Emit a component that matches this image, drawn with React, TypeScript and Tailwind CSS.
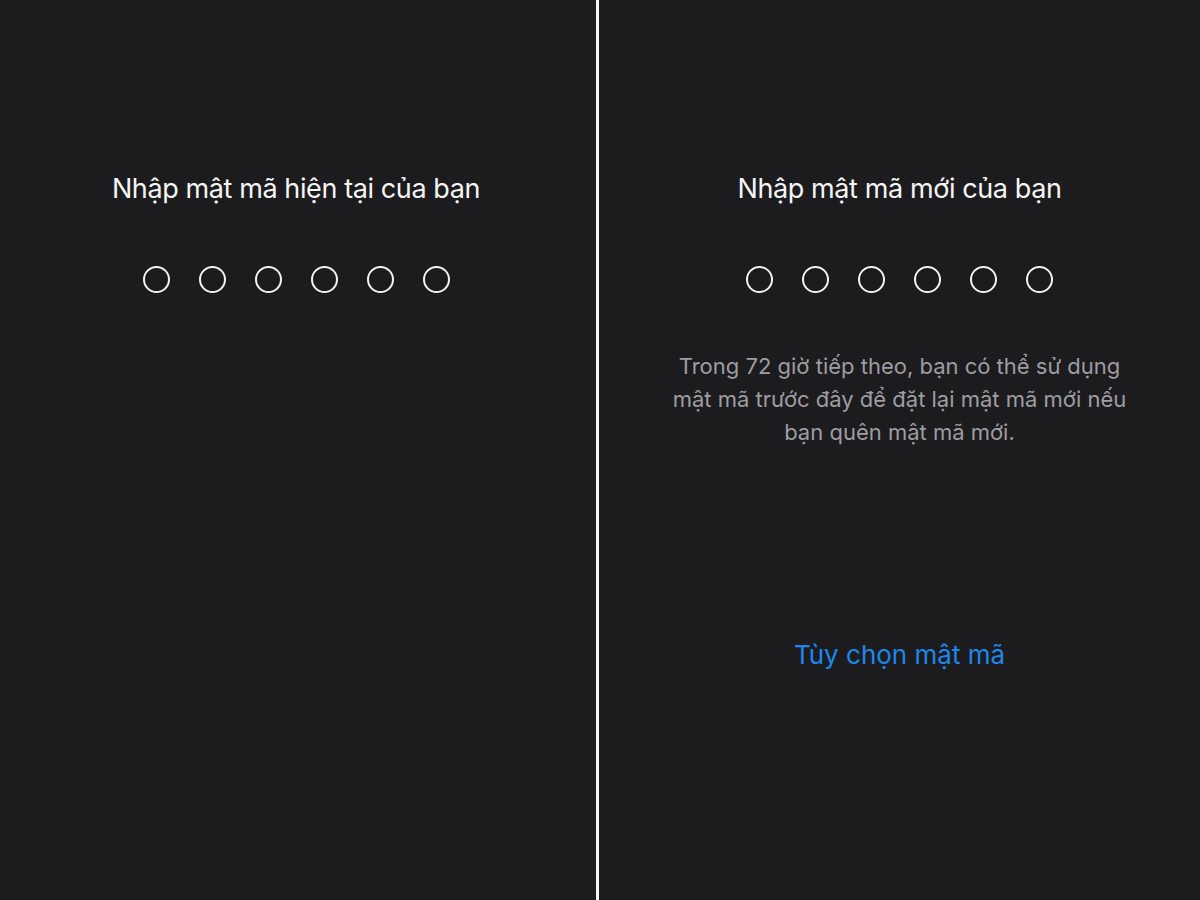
import React from "react";

function Dots() {
  return (
    <div className="flex gap-[29px] mt-[59px]">
      {Array.from({ length: 6 }).map((_, i) => (
        <div
          key={i}
          className="w-[27px] h-[27px] rounded-full border-2 border-[#f2f2f2]"
        />
      ))}
    </div>
  );
}

export default function App() {
  return (
    <div className="w-[1200px] h-[900px] flex bg-white font-['Inter','Noto_Sans',sans-serif] overflow-hidden">
      <div className="w-[596px] h-full bg-[#1c1c1e] flex flex-col items-center pt-[171px] pr-[4px]">
        <div className="text-[27px] leading-[36px] text-[#f5f5f5] tracking-[-0.4px]">
          Nhập mật mã hiện tại của bạn
        </div>
        <Dots />
      </div>
      <div className="w-[3px] h-full bg-[#f4f4f4]" />
      <div className="flex-1 h-full bg-[#1c1c1e] flex flex-col items-center pt-[171px]">
        <div className="text-[27px] leading-[36px] text-[#f5f5f5] tracking-[-0.4px]">
          Nhập mật mã mới của bạn
        </div>
        <Dots />
        <p className="mt-[57px] text-[22px] leading-[33px] text-[#9d9da2] text-center">
          Trong 72 giờ tiếp theo, bạn có thể sử dụng
          <br />
          mật mã trước đây để đặt lại mật mã mới nếu
          <br />
          bạn quên mật mã mới.
        </p>
        <div className="mt-[189px] text-[26px] leading-[34px] text-[#1d87ec]">
          Tùy chọn mật mã
        </div>
      </div>
    </div>
  );
}
